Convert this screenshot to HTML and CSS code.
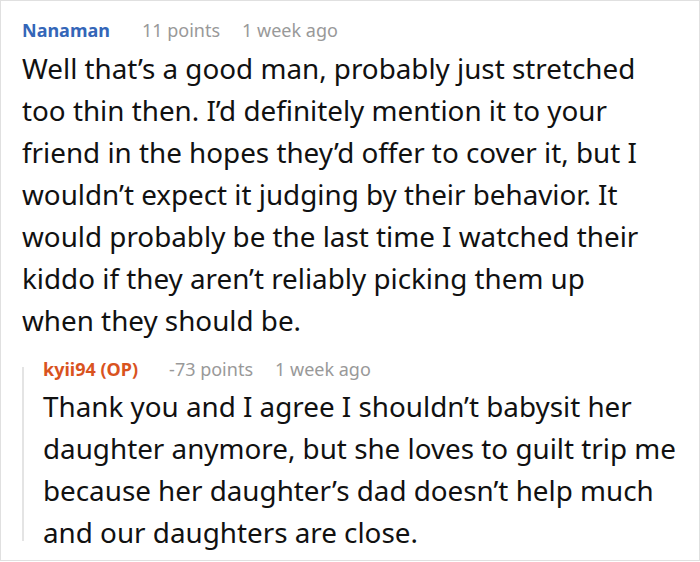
FILE: index.html
```html
<!DOCTYPE html>
<html>
<head>
<meta charset="utf-8">
<link rel="stylesheet" href="styles.css">
</head>
<body>
<div class="frame">
  <div class="comment">
    <div class="meta">
      <span class="user">Nanaman</span>
      <span class="points">11 points</span>
      <span class="time">1 week ago</span>
    </div>
    <p class="text">Well that’s a good man, probably just stretched too thin then. I’d definitely mention it to your friend in the hopes they’d offer to cover it, but I wouldn’t expect it judging by their behavior. It would probably be the last time I watched their kiddo if they aren’t reliably picking them up when they should be.</p>
    <div class="reply">
      <div class="meta">
        <span class="user op">kyii94 (OP)</span>
        <span class="points">-73 points</span>
        <span class="time">1 week ago</span>
      </div>
      <p class="text">Thank you and I agree I shouldn’t babysit her daughter anymore, but she loves to guilt trip me because her daughter’s dad doesn’t help much and our daughters are close.</p>
    </div>
  </div>
</div>
</body>
</html>
```
FILE: styles.css
```css
html, body {
  margin: 0;
  padding: 0;
  background: #fff;
}
.frame {
  box-sizing: border-box;
  width: 700px;
  height: 561px;
  border: 1px solid #e0e0e0;
  overflow: hidden;
  font-family: "Noto Sans", "Open Sans", sans-serif;
  color: #111;
}
.comment {
  padding: 17px 8px 0 21px;
}
.meta {
  display: flex;
  align-items: baseline;
  font-size: 18px;
  line-height: 24px;
  color: #999;
}
.user {
  font-weight: 700;
  color: #3466b8;
  margin-right: 32px;
}
.user.op {
  color: #d9531e;
  margin-right: 31px;
}
.points {
  margin-right: 22px;
}
.text {
  width: 636px;
  margin: 5px 0 0 0;
  font-size: 27.8px;
  line-height: 42px;
}
.reply {
  position: relative;
  margin-top: 16px;
  padding-left: 21px;
}
.reply::before {
  content: "";
  position: absolute;
  left: 0;
  top: 10px;
  bottom: 12px;
  width: 2px;
  background: #e4e4e4;
}
.reply .text {
  margin-top: 4px;
}
```
